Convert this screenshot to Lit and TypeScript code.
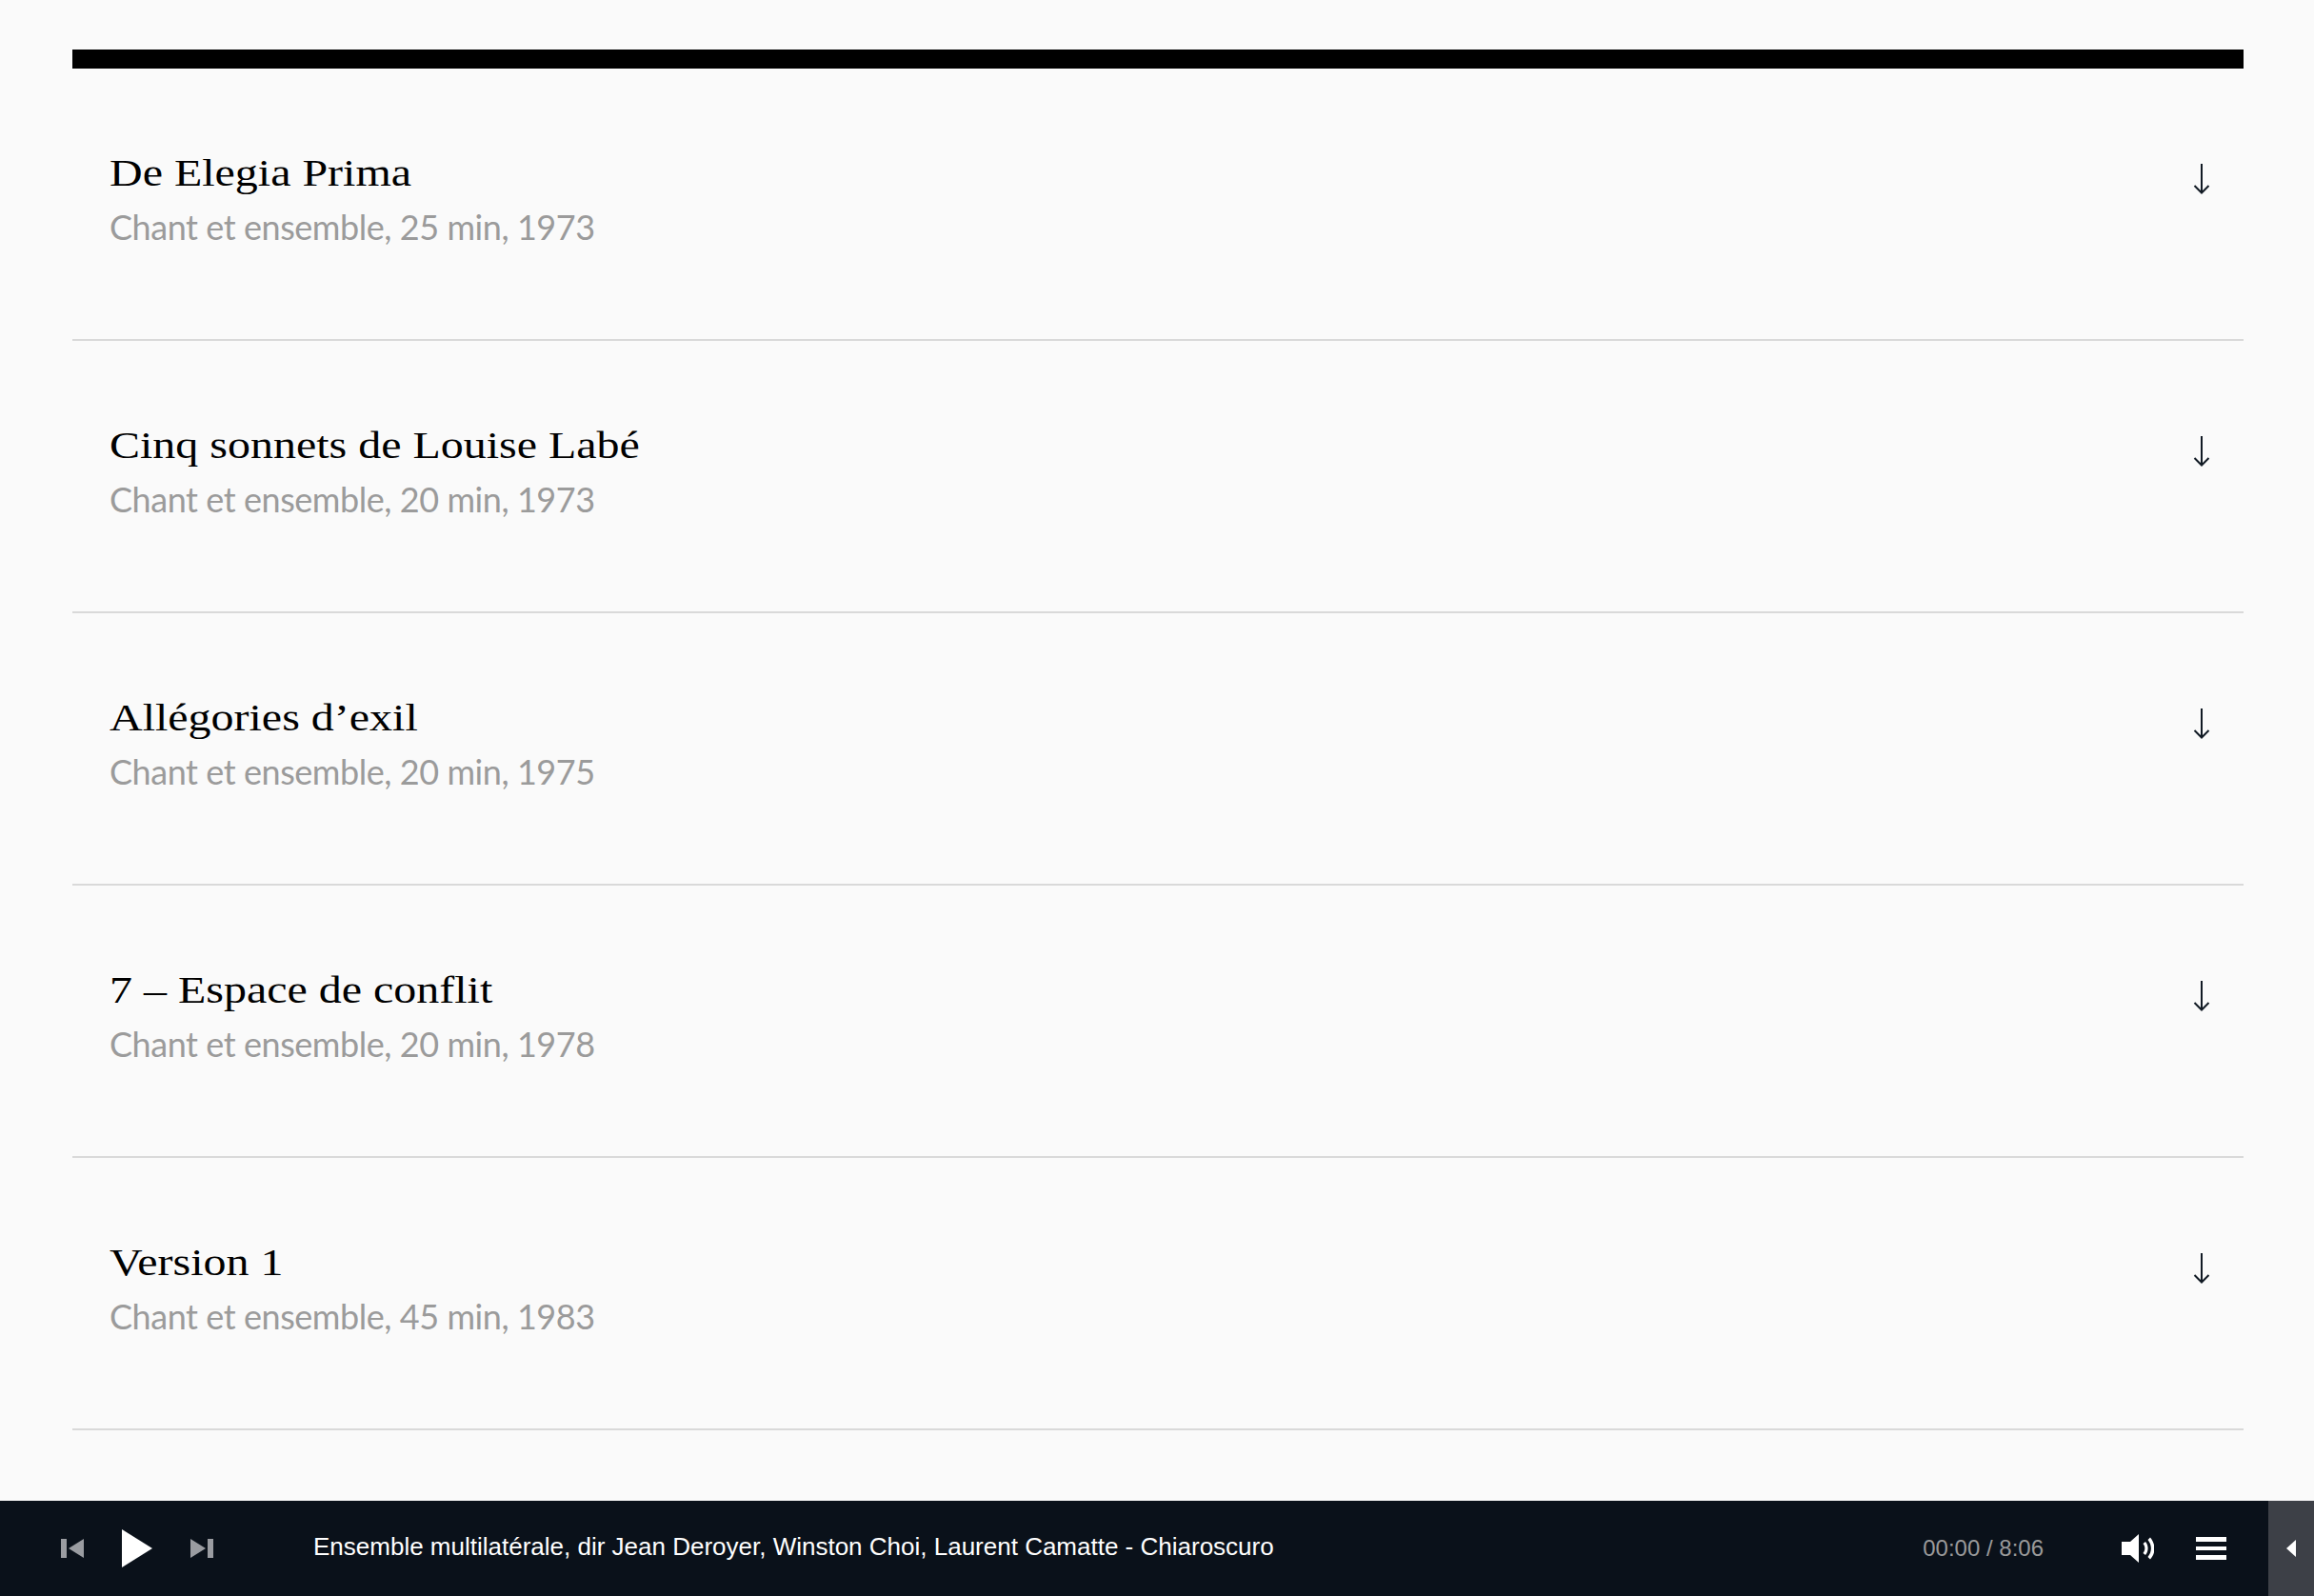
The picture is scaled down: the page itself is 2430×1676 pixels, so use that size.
import { LitElement, html, css } from "lit";
import { customElement } from "lit/decorators.js";

const rows = [
  ["De Elegia Prima", "Chant et ensemble, 25 min, 1973"],
  ["Cinq sonnets de Louise Labé", "Chant et ensemble, 20 min, 1973"],
  ["Allégories d’exil", "Chant et ensemble, 20 min, 1975"],
  ["7 – Espace de conflit", "Chant et ensemble, 20 min, 1978"],
  ["Version 1", "Chant et ensemble, 45 min, 1983"],
];

@customElement("app-root")
export class AppRoot extends LitElement {
  static styles = css`
    :host { display: flex; flex-direction: column; height: 1676px; background: #fafafa; overflow: hidden; }
    main { flex: 1; padding: 52px 74px 0 76px; }
    .list { border-top: 20px solid #000; }
    .row { height: 286px; box-sizing: border-box; border-bottom: 2px solid #d9d9d9; display: flex; justify-content: space-between; padding: 84px 32px 0 39px; }
    .title { font-family: "Liberation Serif", serif; font-size: 41px; line-height: 50px; color: #000; transform: scaleX(1.17); transform-origin: left; white-space: nowrap; }
    .sub { font-family: Lato, sans-serif; font-size: 36px; line-height: 46px; letter-spacing: -0.45px; margin-top: 9px; color: #9b9b9b; white-space: nowrap; }
    .arrow { width: 24px; height: 32px; margin-top: 16px; display: block; flex: none; }
    footer { height: 100px; background: #0a111a; display: flex; align-items: center; }
    .controls { display: flex; align-items: center; padding-left: 64px; gap: 40px; width: 265px; flex: none; }
    .controls svg, .right svg { display: block; flex: none; }
    .track { font-family: "Liberation Sans", Arial, sans-serif; font-size: 26px; color: #fff; flex: 1; white-space: nowrap; margin-top: -3px; }
    .right { display: flex; align-items: center; }
    .time { font-family: "Liberation Sans", Arial, sans-serif; font-size: 24px; color: #9a9a9a; margin-right: 82px; white-space: nowrap; }
    .vol { margin-right: 44px; }
    .menu { margin-right: 44px; }
    .side { width: 48px; height: 100px; background: #3d4047; display: flex; align-items: center; justify-content: center; }
  `;

  render() {
    return html`
      <main>
        <div class="list">
          ${rows.map(
            ([t, s]) => html`<div class="row">
              <div>
                <div class="title">${t}</div>
                <div class="sub">${s}</div>
              </div>
              <svg class="arrow" viewBox="0 0 24 32" fill="none" stroke="#111a24" stroke-width="2">
                <path d="M12 0V30M4.500 23l7.500 7.500 7.500-7.500" />
              </svg>
            </div>`
          )}
        </div>
      </main>
      <footer>
        <div class="controls">
          <svg width="24" height="20" viewBox="0 0 24 20" fill="#9a9ca1"><path d="M0 0h6v20H0zM24 0v20L8 10z" /></svg>
          <svg width="32" height="40" viewBox="0 0 32 40" fill="#fff"><path d="M0 0l32 20L0 40z" /></svg>
          <svg width="24" height="20" viewBox="0 0 24 20" fill="#9a9ca1"><path d="M18 0h6v20h-6zM0 0v20l16-10z" /></svg>
        </div>
        <div class="track">Ensemble multilatérale, dir Jean Deroyer, Winston Choi, Laurent Camatte - Chiaroscuro</div>
        <div class="right">
          <div class="time">00:00 / 8:06</div>
          <svg class="vol" width="34" height="30" viewBox="0 0 34 30" fill="#fff">
            <path d="M0 8h9L18 0v30L9 22H0z" />
            <path d="M22.500 10c2.500 3 2.500 7 0 10l2.500 2c3.500-4 3.500-10 0-14z" />
            <path d="M27.500 6c4.500 5.500 4.500 12.500 0 18l2.500 2.500c6-6.500 6-16 0-23z" />
          </svg>
          <svg class="menu" width="32" height="24" viewBox="0 0 32 24" fill="#fff"><path d="M0 0h32v5H0zM0 10h32v4H0zM0 19h32v5H0z" /></svg>
          <div class="side">
            <svg width="10" height="18" viewBox="0 0 10 18" fill="#fff"><path d="M10 0v18L0 9z" /></svg>
          </div>
        </div>
      </footer>
    `;
  }
}
